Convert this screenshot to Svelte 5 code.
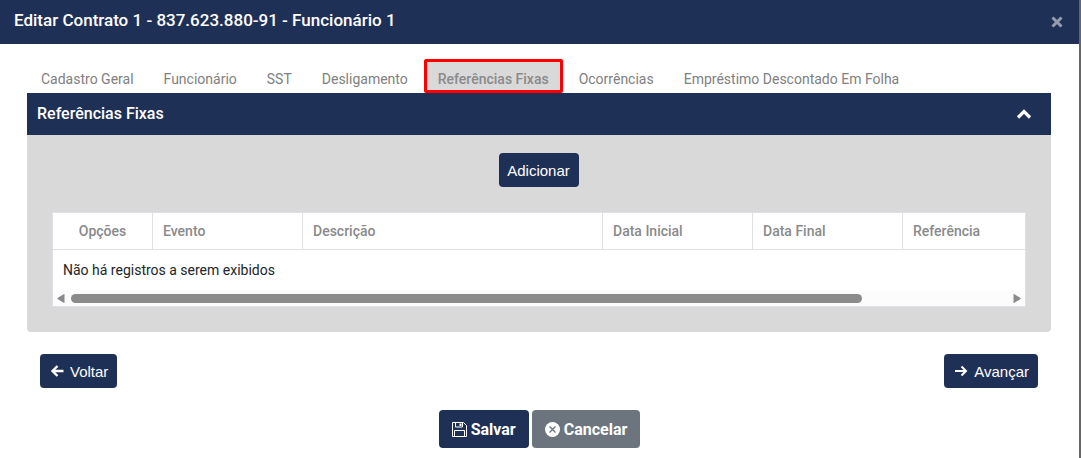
<script lang="ts">
	interface Column {
		label: string;
		width: number;
		center?: boolean;
	}

	const tabs = [
		'Cadastro Geral',
		'Funcionário',
		'SST',
		'Desligamento',
		'Referências Fixas',
		'Ocorrências',
		'Empréstimo Descontado Em Folha',
	];

	const columns: Column[] = [
		{ label: 'Opções', width: 100, center: true },
		{ label: 'Evento', width: 150 },
		{ label: 'Descrição', width: 300 },
		{ label: 'Data Inicial', width: 150 },
		{ label: 'Data Final', width: 150 },
		{ label: 'Referência', width: 300 },
	];
	const tableWidth = columns.reduce((sum, c) => sum + c.width, 0);

	let active = $state('Referências Fixas');
	let open = $state(true);
	let viewWidth = $state(972);
	let scrollLeft = $state(0);
	let scroller: HTMLDivElement | undefined = $state();

	const thumbWidth = $derived(Math.min(100, (viewWidth / tableWidth) * 100));
	const thumbLeft = $derived((scrollLeft / tableWidth) * 100);

	const scrollBy = (dx: number) => scroller?.scrollBy({ left: dx });
</script>

<div class="modal">
	<header class="title">
		<h1>Editar Contrato 1 - 837.623.880-91 - Funcionário 1</h1>
		<button class="icon close" type="button" aria-label="Fechar">
			<svg width="12" height="12" viewBox="0 0 12 12"><path d="M1.500 1.500l9 9M10.500 1.500l-9 9" stroke="currentColor" stroke-width="3" /></svg>
		</button>
	</header>

	<main>
		<div class="tabs" role="tablist">
			{#each tabs as tab}
				<button
					type="button"
					role="tab"
					class:active={tab === active}
					aria-selected={tab === active}
					onclick={() => (active = tab)}>{tab}</button
				>
			{/each}
		</div>

		<section class="panel">
			<div class="panel-head">
				<h2>Referências Fixas</h2>
				<button class="icon" type="button" aria-label="Recolher" aria-expanded={open} onclick={() => (open = !open)}>
					<svg width="16" height="16" viewBox="0 0 16 16"><path d="M2 11.500l6-6 6 6" fill="none" stroke="currentColor" stroke-width="3.200" /></svg>
				</button>
			</div>
			{#if open}
				<div class="panel-body">
					<button class="btn" type="button">Adicionar</button>
					<div class="grid">
						<div
							class="scroller"
							bind:this={scroller}
							bind:clientWidth={viewWidth}
							onscroll={() => (scrollLeft = scroller?.scrollLeft ?? 0)}
						>
							<table style="width: {tableWidth}px">
								<colgroup>
									{#each columns as col}
										<col style="width: {col.width}px" />
									{/each}
								</colgroup>
								<thead>
									<tr>
										{#each columns as col}
											<th scope="col" class:center={col.center}>{col.label}</th>
										{/each}
									</tr>
								</thead>
								<tbody>
									<tr><td colspan={columns.length}>Não há registros a serem exibidos</td></tr>
								</tbody>
							</table>
						</div>
						<div class="scrollbar">
							<button class="icon" type="button" aria-label="Rolar para a esquerda" onclick={() => scrollBy(-40)}>
								<svg width="8" height="9" viewBox="0 0 8 9"><path d="M7.500.3v8.400q0 .3-.5.3L.8 5.300q-.8-.8 0-1.600L7 0q.5 0 .5.3z" fill="currentColor" /></svg>
							</button>
							<div class="track">
								<div class="thumb" style="width: {thumbWidth}%; margin-left: {thumbLeft}%"></div>
							</div>
							<button class="icon" type="button" aria-label="Rolar para a direita" onclick={() => scrollBy(40)}>
								<svg width="8" height="9" viewBox="0 0 8 9"><path d="M.5.3v8.400q0 .3.5.3l6.200-3.700q.8-.8 0-1.600L1 0Q.5 0 .5.3z" fill="currentColor" /></svg>
							</button>
						</div>
					</div>
				</div>
			{/if}
		</section>

		<nav class="steps">
			<button class="btn" type="button">
				<svg width="14" height="14" viewBox="0 0 14 14"><path d="M13.500 7H3M7.500 2L2.500 7l5 5" fill="none" stroke="currentColor" stroke-width="2.400" /></svg>
				Voltar
			</button>
			<button class="btn" type="button">
				<svg width="14" height="14" viewBox="0 0 14 14"><path d="M1 7h11M7.500 2.500L12 7l-4.500 4.500" fill="none" stroke="currentColor" stroke-width="2" /></svg>
				Avançar
			</button>
		</nav>
	</main>

	<footer>
		<button class="btn action" type="button">
			<svg width="15" height="15" viewBox="0 0 15 15" fill="none" stroke="currentColor">
				<path d="M.5.5h11l3 3v11H.5zM3.500.5v4.500h7V.5M2.500 14.500V8.500h10v6" />
				<path d="M8.500 1.500v2.500" stroke-width="2" />
			</svg>
			Salvar
		</button>
		<button class="btn action cancel" type="button">
			<svg width="15" height="15" viewBox="0 0 15 15">
				<circle cx="7.500" cy="7.500" r="7.500" fill="currentColor" />
				<path d="M4.500 4.500l6 6M10.500 4.500l-6 6" stroke="#6c757d" stroke-width="1.300" />
			</svg>
			Cancelar
		</button>
	</footer>
</div>

<style>
	:global(body) {
		background: #fff;
	}
	.modal {
		--navy: #1f3057;
		min-height: 100vh;
		box-sizing: border-box;
		border-right: 2px solid #666;
		font-family: Roboto, sans-serif;
		font-size: 14px;
		color: #212529;
	}
	button {
		font: inherit;
		border: 0;
		cursor: pointer;
	}
	h1,
	h2 {
		margin: 0;
		line-height: 20px;
	}
	h1 {
		font-size: 17px;
		font-weight: 500;
	}
	h2 {
		font-size: 16px;
		font-weight: 500;
	}
	svg {
		display: block;
		flex: none;
	}
	.icon {
		padding: 0;
		background: none;
		color: inherit;
	}
	.title {
		display: flex;
		align-items: center;
		justify-content: space-between;
		height: 44px;
		box-sizing: border-box;
		padding: 0 16px 4px 14px;
		background: var(--navy);
		color: #fff;
	}
	.close {
		padding-top: 4px;
		color: #949db0;
	}
	main {
		padding: 15px 28px 0 27px;
	}
	.tabs {
		display: flex;
		gap: 2px;
	}
	.tabs button {
		height: 34px;
		padding: 6px 14px 0;
		background: none;
		color: #808080;
		white-space: nowrap;
	}
	.tabs .active {
		padding: 6px 11px 0;
		border: 3px solid #f00;
		border-radius: 2px;
		background: #d9d9d9;
		color: #8a8a8a;
		font-weight: 500;
	}
	.panel {
		border-radius: 0 0 4px 4px;
		background: #d9d9d9;
	}
	.panel-head {
		display: flex;
		align-items: center;
		justify-content: space-between;
		height: 42px;
		padding: 0 19px 0 10px;
		background: var(--navy);
		color: #fff;
	}
	.panel-body {
		display: flex;
		flex-direction: column;
		align-items: center;
		gap: 25px;
		padding: 18px 25px 25px;
	}
	.btn {
		display: flex;
		align-items: center;
		gap: 6px;
		height: 34px;
		padding: 0 9px 0 8px;
		border-radius: 4px;
		background: var(--navy);
		color: #fff;
		font-family: 'Liberation Sans', Arial, sans-serif;
		font-size: 15px;
	}
	.steps .btn {
		padding-left: 10px;
	}
	.grid {
		align-self: stretch;
		border: 1px solid #dee0e6;
		background: #fff;
	}
	.scroller {
		overflow-x: auto;
		scrollbar-width: none;
	}
	table {
		table-layout: fixed;
		border-collapse: separate;
		border-spacing: 0;
	}
	th,
	td {
		box-sizing: border-box;
		padding: 0 10px;
		text-align: left;
	}
	th {
		height: 37px;
		border-right: 1px solid #dee0e6;
		border-bottom: 1px solid #dee0e6;
		color: #8a8a8a;
		font-weight: 500;
	}
	.center {
		text-align: center;
	}
	td {
		height: 41px;
		padding-bottom: 2px;
	}
	.scrollbar {
		display: flex;
		align-items: center;
		gap: 6px;
		height: 15px;
		padding: 0 4px;
		background: #fcfcfc;
		color: #8b8b8b;
	}
	.track {
		flex: 1;
	}
	.thumb {
		height: 9px;
		border-radius: 5px;
		background: #8b8b8b;
	}
	.steps {
		display: flex;
		justify-content: space-between;
		padding: 22px 13px;
	}
	footer {
		display: flex;
		justify-content: center;
		gap: 3px;
	}
	.action {
		height: 38px;
		gap: 4px;
		padding: 0 13px;
		font-family: Roboto, sans-serif;
		font-size: 16px;
		font-weight: 700;
	}
	.cancel {
		background: #6c757d;
	}
</style>
